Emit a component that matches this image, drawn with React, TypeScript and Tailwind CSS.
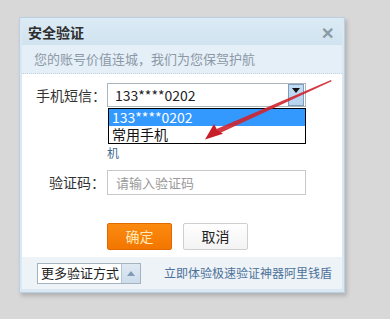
import React from "react";

const font = { fontFamily: '"Noto Sans CJK SC", "Noto Sans", sans-serif' };

function RedArrow() {
  // tapered red arrow pointing from the select's drop button down to the list
  return (
    <svg className="absolute left-0 top-0 pointer-events-none" width="390" height="319">
      <polygon points="331,80 331.6,81.2 219,133.5 216.5,129" fill="#d0242c" opacity="0.9" />
      <polygon points="205,139.5 214,124 217.2,130 223,133.8" fill="#c81e28" />
    </svg>
  );
}

export default function App() {
  return (
    <div className="relative w-[390px] h-[319px] bg-[#d8d8d8] overflow-hidden pt-[17px] pl-[19px]" style={font}>
      <div className="w-[326px] border border-[#bcd0e0] bg-[#d9e8f3] shadow-[2px_3px_4px_rgba(0,0,0,0.18)] px-[2px] pb-[3px]">
        {/* title bar */}
        <div className="h-[27px] flex items-center justify-between pl-[6px] pr-[8px] bg-gradient-to-b from-[#dcebf6] to-[#cfe3ef]">
          <span className="text-[14px] font-bold text-[#2e2e2e] leading-none">安全验证</span>
          <span className="text-[#8c9aa4] text-[16px] leading-none font-bold">✕</span>
        </div>

        {/* inner panel */}
        <div className="bg-white">
          <div className="h-[29px] flex items-center pl-[12px] bg-[#e5eff8] border-b border-dotted border-[#c8d4de] text-[13px] text-[#8b99a6]">
            您的账号价值连城，我们为您保驾护航
          </div>

          <div className="pt-[9px] pl-[14px]">
            <div className="flex items-start">
              <span className="w-[71px] h-[24px] flex items-center text-[14px] text-[#333]">手机短信：</span>
              <div className="relative">
                <div className="w-[199px] h-[24px] border border-[#aab6c0] flex items-center justify-between">
                  <span className="pl-[7px] text-[14px] text-[#222]">133****0202</span>
                  <div className="w-[16px] h-[22px] mr-px border border-[#7f9db9] bg-gradient-to-b from-[#c4dcf4] to-[#b5d3f0] flex justify-center pt-[3px]">
                    <svg width="8" height="5"><polygon points="0,0 8,0 4,5" fill="#111" /></svg>
                  </div>
                </div>
                <div className="text-[12px] text-[#3f6b8f] pt-[39px] leading-[14px]">机</div>
                {/* open list */}
                <div className="absolute left-px top-[25px] w-[198px] border border-black bg-white text-[14px]">
                  <div className="bg-[#3399ff] text-white pl-[3px] h-[17px] leading-[17px]">133****0202</div>
                  <div className="text-[#111] pl-[3px] h-[17px] leading-[17px]">常用手机</div>
                </div>
              </div>
            </div>

            <div className="flex items-center mt-[10px]">
              <span className="w-[71px] flex justify-end pr-[2px] text-[14px] text-[#333]">验证码：</span>
              <div className="w-[199px] h-[25px] border border-[#c5c9cc] flex items-center pl-[8px] text-[13px] text-[#9a9a9a]">
                请输入验证码
              </div>
            </div>

            <div className="flex gap-[11px] pl-[71px] mt-[28px] pb-[7px]">
              <div className="w-[65px] h-[27px] rounded-[2px] bg-gradient-to-b from-[#fb8a10] to-[#f37600] border border-[#e06a00] flex items-center justify-center text-[14px] text-[#ffe9b8]">
                确定
              </div>
              <div className="w-[65px] h-[27px] rounded-[2px] bg-gradient-to-b from-white to-[#f3f3f3] border border-[#cfcfcf] flex items-center justify-center text-[14px] text-[#222]">
                取消
              </div>
            </div>
          </div>

          <div className="h-[32px] bg-[#eef3f8] flex items-center justify-between pl-[15px] pr-[10px]">
            <div className="w-[104px] h-[21px] border border-[#a5b3c0] bg-white flex items-center justify-between">
              <span className="pl-[3px] text-[13px] text-[#222]">更多验证方式</span>
              <div className="w-[19px] h-full border-l border-[#b5c6d6] bg-gradient-to-b from-[#dfe9f3] to-[#cddceb] flex items-center justify-center">
                <svg width="8" height="5"><polygon points="4,0 8,5 0,5" fill="#7f9bb8" /></svg>
              </div>
            </div>
            <span className="text-[12px] text-[#4d7299]">立即体验极速验证神器阿里钱盾</span>
          </div>
        </div>
      </div>
      <RedArrow />
    </div>
  );
}
